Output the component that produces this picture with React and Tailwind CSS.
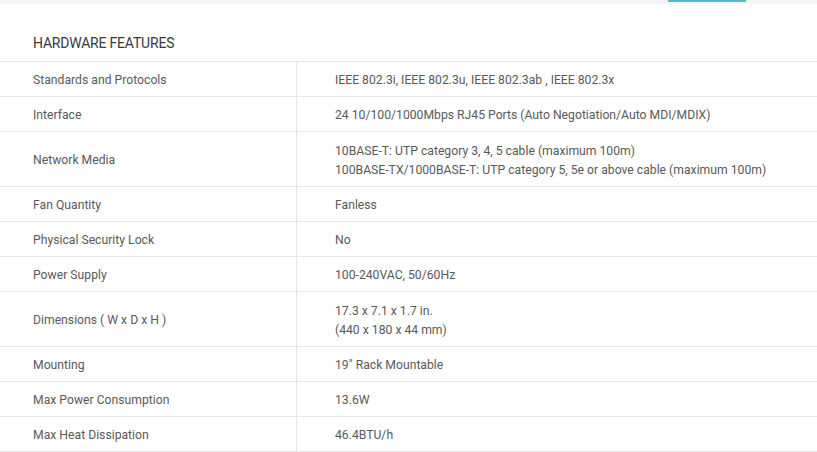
import React from "react";

const specs = [
  { label: "Standards and Protocols", value: ["IEEE 802.3i, IEEE 802.3u, IEEE 802.3ab , IEEE 802.3x"] },
  { label: "Interface", value: ["24 10/100/1000Mbps RJ45 Ports (Auto Negotiation/Auto MDI/MDIX)"] },
  {
    label: "Network Media",
    value: [
      "10BASE-T: UTP category 3, 4, 5 cable (maximum 100m)",
      "100BASE-TX/1000BASE-T: UTP category 5, 5e or above cable (maximum 100m)",
    ],
  },
  { label: "Fan Quantity", value: ["Fanless"] },
  { label: "Physical Security Lock", value: ["No"] },
  { label: "Power Supply", value: ["100-240VAC, 50/60Hz"] },
  { label: "Dimensions ( W x D x H )", value: ["17.3 x 7.1 x 1.7 in.", "(440 x 180 x 44 mm)"] },
  { label: "Mounting", value: ['19" Rack Mountable'] },
  { label: "Max Power Consumption", value: ["13.6W"] },
  { label: "Max Heat Dissipation", value: ["46.4BTU/h"] },
];

const App = () => {
  return (
    <div className="w-[817px] h-[452px] bg-white overflow-hidden font-['Roboto',sans-serif]">
      {/* top strip */}
      <div className="h-[4px] bg-[#f4f4f6] relative">
        <div className="absolute left-[668px] top-0 w-[78px] h-[2px] bg-[#5ab9c7]" />
      </div>

      {/* title */}
      <div className="h-[57px] flex items-center pl-[33px] pt-[21px]">
        <h3 className="text-[14px] text-[#3a3a3a] tracking-[-0.2px]">HARDWARE FEATURES</h3>
      </div>

      {/* table */}
      <div className="border-t border-[#e6e6e6]">
        {specs.map((row) => (
          <div key={row.label} className="flex border-b border-[#e6e6e6] text-[12.2px] text-[#5a5a5a]">
            <div className="w-[297px] shrink-0 border-r border-[#e6e6e6] pl-[33px] pt-[3px] flex items-center">
              {row.label}
            </div>
            <div
              className={`flex-1 pl-[38px] pt-[3px] flex flex-col justify-center ${
                row.value.length > 1 ? "h-[54px]" : "h-[34px]"
              }`}
            >
              {row.value.map((line) => (
                <p key={line} className="leading-[19px]">
                  {line}
                </p>
              ))}
            </div>
          </div>
        ))}
      </div>
    </div>
  );
};

export default App;
